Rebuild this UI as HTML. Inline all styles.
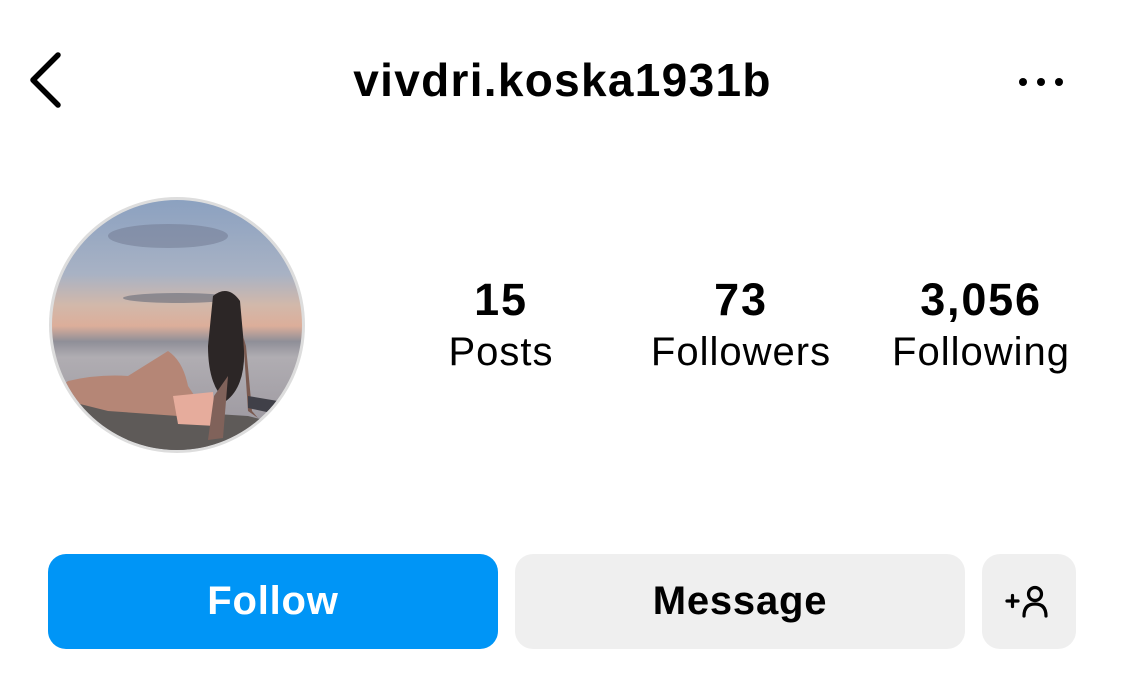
<!DOCTYPE html>
<html><head><style>
body{margin:0;width:1125px;height:693px;background:#fff;font-family:"Liberation Sans",Arial,sans-serif;position:relative;overflow:hidden;color:#000}
.a{position:absolute}
.t{position:absolute;text-align:center;width:240px}
.n{font-weight:bold;font-size:45px;top:274px;letter-spacing:1.8px}
.l{font-size:40px;top:330px;letter-spacing:1px}
.btn{position:absolute;top:554px;height:95px;border-radius:18px;font-weight:bold;font-size:40px;line-height:95px;text-align:center;letter-spacing:0.8px}
</style></head><body>
<svg class="a" style="left:24px;top:50px" width="44" height="62" viewBox="0 0 44 62"><path d="M34 5 L9 30 L34 55" fill="none" stroke="#000" stroke-width="5.5" stroke-linecap="round" stroke-linejoin="round"/></svg>
<div class="a" style="left:0;width:1125px;top:53px;text-align:center;font-weight:bold;font-size:46px;letter-spacing:1.3px">vivdri.koska1931b</div>
<svg class="a" style="left:1015px;top:75px" width="52" height="14"><circle cx="8" cy="7" r="4"/><circle cx="26" cy="7" r="4"/><circle cx="44" cy="7" r="4"/></svg>
<svg class="a" style="left:48px;top:196px" width="260" height="260" viewBox="0 0 260 260">
<defs>
<clipPath id="c"><circle cx="129" cy="129" r="125"/></clipPath>
<linearGradient id="sky" x1="0" y1="0" x2="0" y2="1">
<stop offset="0" stop-color="#8aa0c0"/><stop offset="0.3" stop-color="#a8b2c4"/><stop offset="0.42" stop-color="#d2b8aa"/><stop offset="0.5" stop-color="#dcae9a"/><stop offset="0.56" stop-color="#8f8f98"/><stop offset="0.62" stop-color="#b0adb2"/><stop offset="0.85" stop-color="#a09ca3"/><stop offset="1" stop-color="#7a7880"/>
</linearGradient>
</defs>
<circle cx="129" cy="129" r="128" fill="#ddd"/>
<g clip-path="url(#c)">
<rect width="260" height="260" fill="url(#sky)"/>
<ellipse cx="120" cy="40" rx="60" ry="12" fill="#6f7890" opacity=".5"/>
<ellipse cx="130" cy="102" rx="55" ry="5" fill="#666a78" opacity=".6"/>
<path d="M0 200 Q60 215 120 215 L200 220 L260 235 L260 260 L0 260Z" fill="#5e5a58"/>
<path d="M0 200 L20 185 Q50 178 80 180 L120 155 Q135 165 140 190 L150 205 L130 220 L60 215 Z" fill="#b58676"/>
<path d="M125 200 L165 196 L168 230 L130 228Z" fill="#e6ac9c"/>
<path d="M165 100 Q180 88 192 105 L196 150 Q198 190 178 205 Q160 190 160 150Z" fill="#2c2626"/>
<path d="M180 180 L175 242 L160 244 L166 200Z" fill="#80625a"/>
<path d="M195 140 L200 215 L210 222 L204 215 L198 150Z" fill="#7a5a50"/>
<path d="M200 200 L260 210 L260 225 L200 212Z" fill="#404048"/>
</g>
</svg>
<div class="t n" style="left:381px">15</div>
<div class="t l" style="left:381px">Posts</div>
<div class="t n" style="left:621px">73</div>
<div class="t l" style="left:621px">Followers</div>
<div class="t n" style="left:861px">3,056</div>
<div class="t l" style="left:861px">Following</div>
<div class="btn" style="left:48px;width:450px;background:#0095f6;color:#fff">Follow</div>
<div class="btn" style="left:515px;width:450px;background:#efefef;color:#000">Message</div>
<div class="btn" style="left:982px;width:94px;background:#efefef"></div>
<svg class="a" style="left:1004px;top:583px" width="50" height="40" viewBox="0 0 50 40"><g fill="none" stroke="#000" stroke-width="3.2" stroke-linecap="round"><path d="M3 18h11M8.5 12.5v11"/><circle cx="31" cy="11" r="6.5"/><path d="M20 33 Q20 21 31 21 Q42 21 42 33"/></g></svg>
</body></html>
